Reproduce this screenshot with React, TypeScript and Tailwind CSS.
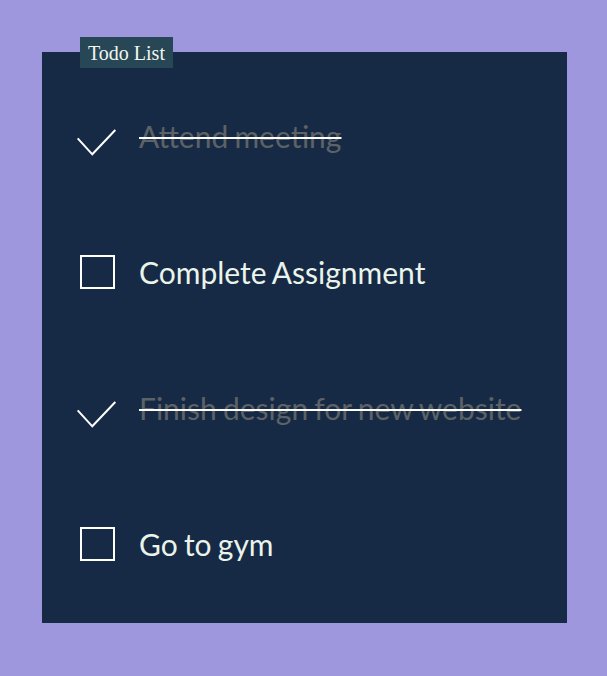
import React from 'react'

const todos = [
  { id: 1, title: 'Attend meeting', done: true },
  { id: 2, title: 'Complete Assignment', done: false },
  { id: 3, title: 'Finish design for new website', done: true },
  { id: 4, title: 'Go to gym', done: false },
]

function CheckMark() {
  return (
    <svg
      width="35"
      height="28"
      viewBox="0 0 35 28"
      fill="none"
      className="overflow-visible translate-y-[6px]"
    >
      <polyline points="-2.3,10.3 12.3,26.3 35.3,2" stroke="#ffffff" strokeWidth="2" />
    </svg>
  )
}

export default function App() {
  return (
    <div className="min-h-screen bg-[#9e97de] pl-[42px] pt-[52px]">
      <div className="relative w-[525px] h-[571px] bg-[#172a45] pt-[16px] font-['Lato','Liberation_Sans',sans-serif]">
        {/* Legend */}
        <div className="absolute left-[38px] top-[-15px] h-[31px] px-[8px] flex items-center bg-[#274756] text-[#f2f6ee] text-[20px] font-['Liberation_Serif',serif]">
          Todo List
        </div>

        {todos.map((todo) => (
          <div key={todo.id} className="h-[136px] flex items-center pl-[38px]">
            <div className="w-[35px] h-[34px] flex items-center shrink-0">
              {todo.done ? (
                <CheckMark />
              ) : (
                <div className="w-[35px] h-[34px] border-2 border-white" />
              )}
            </div>
            <span
              className={`ml-[24px] text-[30px] leading-[38px] [word-spacing:-1.5px] ${
                todo.done
                  ? 'text-[#5c6266] line-through decoration-white decoration-[1.5px]'
                  : 'text-[#eaf4ea]'
              }`}
            >
              {todo.title}
            </span>
          </div>
        ))}
      </div>
    </div>
  )
}
